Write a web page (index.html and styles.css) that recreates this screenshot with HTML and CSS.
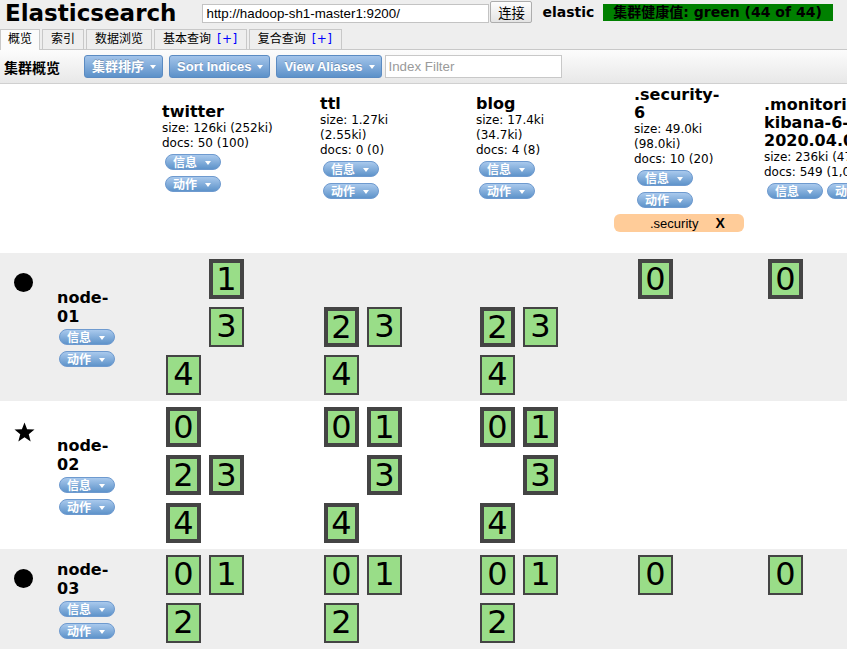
FILE: index.html
```html
<!DOCTYPE html>
<html lang="zh">
<head>
<meta charset="utf-8">
<title>Elasticsearch</title>
<link rel="stylesheet" href="styles.css">
</head>
<body>
<div class="top">
  <div class="hdr">
    <h1 class="title">Elasticsearch</h1>
    <input class="url" type="text" value="http://hadoop-sh1-master1:9200/">
    <button class="connect">连接</button>
    <span class="cluster">elastic</span>
    <span class="health">集群健康值: green (44 of 44)</span>
  </div>
  <div class="tabs">
    <div class="tab first active">概览</div>
    <div class="tab">索引</div>
    <div class="tab">数据浏览</div>
    <div class="tab">基本查询 <span class="plus">[+]</span></div>
    <div class="tab">复合查询 <span class="plus">[+]</span></div>
  </div>
</div>
<div class="toolbar">
  <span class="tb-label">集群概览</span>
  <span class="mbtn">集群排序<i class="caret"></i></span>
  <span class="mbtn">Sort Indices<i class="caret"></i></span>
  <span class="mbtn last">View Aliases<i class="caret"></i></span>
  <input class="filter" type="text" placeholder="Index Filter">
</div>
<div class="main">
<table class="nodes">
  <colgroup>
    <col class="w-icon"><col class="w-node"><col class="w-a"><col class="w-b"><col class="w-a"><col class="w-c"><col class="w-d">
  </colgroup>
  <thead>
    <tr class="idx-row">
      <th></th><th></th>
      <th><div class="idx">
        <h3>twitter</h3>
        <p>size: 126ki (252ki)</p>
        <p>docs: 50 (100)</p>
        <div class="btns"><span class="sbtn">信息<i class="caret"></i></span><span class="sbtn">动作<i class="caret"></i></span></div>
      </div></th>
      <th><div class="idx">
        <h3>ttl</h3>
        <p>size: 1.27ki (2.55ki)</p>
        <p>docs: 0 (0)</p>
        <div class="btns"><span class="sbtn">信息<i class="caret"></i></span><span class="sbtn">动作<i class="caret"></i></span></div>
      </div></th>
      <th><div class="idx">
        <h3>blog</h3>
        <p>size: 17.4ki (34.7ki)</p>
        <p>docs: 4 (8)</p>
        <div class="btns"><span class="sbtn">信息<i class="caret"></i></span><span class="sbtn">动作<i class="caret"></i></span></div>
      </div></th>
      <th><div class="idx narrow">
        <h3>.security-6</h3>
        <p>size: 49.0ki (98.0ki)</p>
        <p>docs: 10 (20)</p>
        <div class="btns"><span class="sbtn">信息<i class="caret"></i></span><span class="sbtn">动作<i class="caret"></i></span></div>
      </div></th>
      <th><div class="idx wide">
        <h3>.monitoring-kibana-6-2020.04.08</h3>
        <p>size: 236ki (472ki)</p>
        <p>docs: 549 (1,098)</p>
        <div class="btns"><span class="sbtn">信息<i class="caret"></i></span><span class="sbtn">动作<i class="caret"></i></span></div>
      </div></th>
    </tr>
    <tr class="alias-row">
      <td colspan="5"></td>
      <td><div class="alias">.security<b>X</b></div></td>
      <td></td>
    </tr>
  </thead>
  <tbody>
    <tr class="odd">
      <td class="icon"><span class="dot"></span></td>
      <td class="node"><div class="ninfo"><h3>node-01</h3>
        <div class="btns"><span class="sbtn">信息<i class="caret"></i></span><span class="sbtn">动作<i class="caret"></i></span></div></div></td>
      <td><div class="shards"><div></div><div class="shard primary">1</div><div></div><div class="shard">3</div><div class="shard">4</div></div></td>
      <td><div class="shards"><div></div><div></div><div class="shard primary">2</div><div class="shard">3</div><div class="shard">4</div></div></td>
      <td><div class="shards"><div></div><div></div><div class="shard primary">2</div><div class="shard">3</div><div class="shard">4</div></div></td>
      <td><div class="shards"><div class="shard primary">0</div></div></td>
      <td><div class="shards"><div class="shard primary">0</div></div></td>
    </tr>
    <tr>
      <td class="icon"><svg class="star" width="21" height="20" viewBox="0 0 24 23"><polygon points="12,0.5 15,8.2 23.5,8.7 16.9,14 19.1,22.3 12,17.6 4.9,22.3 7.1,14 0.5,8.7 9,8.2" fill="#000"/></svg></td>
      <td class="node"><div class="ninfo"><h3>node-02</h3>
        <div class="btns"><span class="sbtn">信息<i class="caret"></i></span><span class="sbtn">动作<i class="caret"></i></span></div></div></td>
      <td><div class="shards"><div class="shard primary">0</div><div></div><div class="shard primary">2</div><div class="shard primary">3</div><div class="shard primary">4</div></div></td>
      <td><div class="shards"><div class="shard primary">0</div><div class="shard primary">1</div><div></div><div class="shard primary">3</div><div class="shard primary">4</div></div></td>
      <td><div class="shards"><div class="shard primary">0</div><div class="shard primary">1</div><div></div><div class="shard primary">3</div><div class="shard primary">4</div></div></td>
      <td></td>
      <td></td>
    </tr>
    <tr class="odd">
      <td class="icon"><span class="dot"></span></td>
      <td class="node"><div class="ninfo"><h3>node-03</h3>
        <div class="btns"><span class="sbtn">信息<i class="caret"></i></span><span class="sbtn">动作<i class="caret"></i></span></div></div></td>
      <td><div class="shards"><div class="shard">0</div><div class="shard">1</div><div class="shard">2</div></div></td>
      <td><div class="shards"><div class="shard">0</div><div class="shard">1</div><div class="shard">2</div></div></td>
      <td><div class="shards"><div class="shard">0</div><div class="shard">1</div><div class="shard">2</div></div></td>
      <td><div class="shards"><div class="shard">0</div></div></td>
      <td><div class="shards"><div class="shard">0</div></div></td>
    </tr>
  </tbody>
</table>
</div>
</body>
</html>
```

FILE: styles.css
```css
html, body {
  margin: 0;
  padding: 0;
  overflow: hidden;
}
body {
  width: 847px;
  height: 653px;
  font-family: "DejaVu Sans", "Noto Sans CJK SC", sans-serif;
  font-size: 12px;
  color: #000;
  background: #fff;
}

/* ---------- header ---------- */
.top {
  background: #eee;
}
.hdr {
  display: flex;
  align-items: flex-start;
  height: 29px;
}
.title {
  margin: 0 26px 0 5px;
  font: bold 23px/26px "DejaVu Sans", sans-serif;
}
.url {
  box-sizing: border-box;
  width: 287px;
  height: 19px;
  margin: 4px 0 0 0;
  padding: 0 3px;
  border: 1px solid #c3c3c3;
  background: #fff;
  font: 13.33px "Liberation Sans", sans-serif;
  color: #000;
}
.connect {
  box-sizing: border-box;
  width: 42px;
  height: 22px;
  margin: 1px 0 0 1px;
  padding: 0;
  border: 1px solid #adadad;
  border-radius: 2px;
  background: linear-gradient(#fdfdfd, #e4e4e4);
  font: 13.33px "Liberation Sans", "Noto Sans CJK SC", sans-serif;
  color: #000;
}
.cluster {
  margin: 3px 0 0 10px;
  font: bold 14px/18px "DejaVu Sans", sans-serif;
}
.health {
  box-sizing: border-box;
  width: 230px;
  height: 17px;
  margin: 4px 0 0 9px;
  padding-left: 10px;
  background: #008000;
  color: #000;
  font: bold 14px/17px "DejaVu Sans", "Noto Sans CJK SC", sans-serif;
  white-space: nowrap;
}

/* ---------- tabs ---------- */
.tabs {
  display: flex;
  align-items: flex-end;
  height: 20px;
}
.tab {
  box-sizing: border-box;
  height: 20px;
  padding: 0 8px;
  margin-right: 2px;
  border: 1px solid #c8c8c8;
  border-bottom: 0;
  background: #eee;
  font: 12px/19px "DejaVu Sans", "Noto Sans CJK SC", sans-serif;
  color: #000;
  white-space: nowrap;
}
.tab.first {
  padding: 0 7px;
}
.tab.active {
  position: relative;
  z-index: 1;
  height: 21px;
  margin-bottom: -1px;
  background: #fbfbfb;
}
.plus {
  margin-left: 2px;
  color: #00f;
  letter-spacing: 0.5px;
}

/* ---------- toolbar ---------- */
.toolbar {
  display: flex;
  align-items: center;
  height: 33px;
  padding-left: 4px;
  border-top: 1px solid #c8c8c8;
  border-bottom: 1px solid #d0d0d0;
  background: linear-gradient(#fcfcfc, #e8e8e8);
}
.tb-label {
  margin-right: 24px;
  font: bold 14px/18px "Noto Sans CJK SC", sans-serif;
}
.mbtn {
  box-sizing: border-box;
  display: inline-flex;
  align-items: center;
  height: 23px;
  margin-right: 6px;
  padding: 0 6px 0 7px;
  border: 1px solid #5b8bc2;
  border-radius: 3px;
  background: linear-gradient(#a3c4ea, #5c91c9);
  color: #fff;
  font: bold 13px/21px "Liberation Sans", "Noto Sans CJK SC", sans-serif;
  text-shadow: 0 -1px 0 rgba(0, 0, 0, 0.2);
  white-space: nowrap;
}
.mbtn.last {
  margin-right: 3px;
}
.caret {
  display: inline-block;
  width: 0;
  height: 0;
  border-left: 3.5px solid transparent;
  border-right: 3.5px solid transparent;
  border-top: 4px solid #fff;
}
.mbtn .caret {
  margin-left: 6px;
}
.filter {
  box-sizing: border-box;
  width: 177px;
  height: 23px;
  margin: 0;
  padding: 0 3px;
  border: 1px solid #c8c8c8;
  background: #fff;
  font: 13.33px "Liberation Sans", sans-serif;
}
.filter::placeholder {
  color: #9a9a9a;
}

/* ---------- nodes table ---------- */
.main {
  overflow: hidden;
}
.nodes {
  table-layout: fixed;
  width: 964px;
  border-collapse: collapse;
  border-spacing: 0;
}
.w-icon { width: 56px; }
.w-node { width: 106px; }
.w-a { width: 158px; }
.w-b { width: 156px; }
.w-c { width: 130px; }
.w-d { width: 200px; }

.nodes td, .nodes th {
  padding: 0;
  text-align: left;
  font-weight: normal;
}
.nodes .idx-row th {
  vertical-align: middle;
  padding: 2px 0 4px;
}
.idx {
  width: 116px;
}
.idx.narrow {
  width: 92px;
}
.idx.wide {
  width: 126px;
}
.idx h3, .ninfo h3 {
  margin: 0;
  font: bold 16px/18px "DejaVu Sans", sans-serif;
}
.ninfo h3 {
  line-height: 19px;
}
.idx p {
  margin: 0;
  font-size: 12px;
  line-height: 15px;
}
.btns {
  display: flex;
  flex-wrap: wrap;
  gap: 6px 4px;
  padding-left: 3px;
  margin-top: 3px;
}
.sbtn {
  box-sizing: border-box;
  display: block;
  width: 56px;
  height: 16px;
  padding-left: 7px;
  border: 1px solid #6e9acf;
  border-radius: 8px;
  background: linear-gradient(#a9c9ed, #5e93ca);
  color: #fff;
  font: bold 12px/14px "Noto Sans CJK SC", sans-serif;
  white-space: nowrap;
}
.sbtn .caret {
  margin-left: 8px;
  vertical-align: 2px;
}

.nodes .alias-row td {
  height: 41px;
  vertical-align: top;
}
.alias {
  box-sizing: border-box;
  width: 130px;
  height: 18px;
  margin: 2px 0 0 -20px;
  padding-left: 36px;
  border-radius: 6px;
  background: #ffcc99;
  font: 13px/18px "Liberation Sans", sans-serif;
  white-space: nowrap;
}
.alias b {
  margin-left: 17px;
  font-size: 14px;
}

.nodes tbody td {
  vertical-align: top;
  padding: 2px 0;
}
.nodes tbody tr.odd {
  background: #eee;
}
.nodes tbody td.icon {
  padding: 20px 0 0 14px;
}
.nodes tbody td.node {
  vertical-align: middle;
  padding: 0 0 0 1px;
}
.ninfo {
  width: 62px;
}
.ninfo .btns {
  flex-direction: column;
  padding-left: 2px;
}
.dot {
  display: block;
  width: 19px;
  height: 19px;
  border-radius: 50%;
  background: #000;
}
.star {
  display: block;
  margin-top: 1px;
}

.shards {
  display: grid;
  grid-template-columns: 43px 43px;
  grid-auto-rows: 48px;
}
.shard {
  box-sizing: border-box;
  width: 35px;
  height: 40px;
  margin: 4px;
  border: 2px solid #444;
  background: #99dd88;
  font: 32px/34px "DejaVu Sans", sans-serif;
  text-align: center;
  color: #000;
}
.shard.primary {
  border-width: 4px;
  line-height: 32px;
}
```
